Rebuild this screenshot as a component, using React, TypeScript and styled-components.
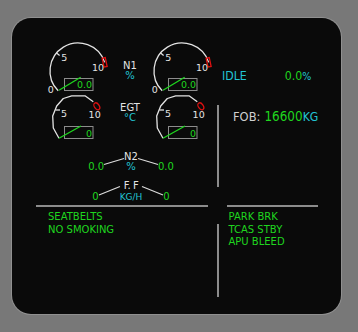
import React from "react";
import styled, { createGlobalStyle, css } from "styled-components";

const GREEN = "#1fd61f";
const CYAN = "#22c4d4";
const WHITE = "#e4e4e4";
const RULE = "#8c8c8c";
const RED = "#e01010";

const tall = (k: number) => css`
  display: inline-block;
  transform: scaleY(${k});
`;

const Global = createGlobalStyle`
  html, body { margin: 0; padding: 0; background: #787878; }
  body {
    width: 358px; height: 332px; overflow: hidden;
    font-family: "DejaVu Sans", "Noto Sans", sans-serif;
  }
`;

const Page = styled.div`
  width: 358px;
  height: 332px;
  box-sizing: border-box;
  padding: 18px 17px 18px 12px;
  background: #787878;
`;

const Screen = styled.div`
  width: 329px;
  height: 296px;
  box-sizing: border-box;
  background: #0a0a0a;
  border-radius: 19px;
  box-shadow: 0 0 0 1px #909090;
  padding: 20px 0 0 24px;
  display: flex;
  flex-direction: column;
`;

const Top = styled.div`
  display: flex;
  padding-left: 8px;
  height: 164px;
`;

const LeftCol = styled.div`
  width: 172px;
  display: flex;
  flex-direction: column;
`;

const GaugeGrid = styled.div`
  display: grid;
  grid-template-columns: 68px 36px 68px;
  grid-template-rows: 56px 50px;
`;

const LabelCell = styled.div<{ $pt: number }>`
  display: flex;
  flex-direction: column;
  align-items: center;
  padding-top: ${(p) => p.$pt}px;
`;

const Caption = styled.span<{ $size?: number; $spacing?: number }>`
  color: ${WHITE};
  font-size: ${(p) => p.$size ?? 10}px;
  letter-spacing: ${(p) => p.$spacing ?? 0}px;
  line-height: 10px;
  white-space: nowrap;
`;

const Unit = styled.span<{ $size?: number; $mt?: number }>`
  color: ${CYAN};
  font-size: ${(p) => p.$size ?? 10}px;
  line-height: 10px;
  margin-top: ${(p) => p.$mt ?? 0}px;
  white-space: nowrap;
`;

const Reading = styled.span<{ $mt: number }>`
  color: ${GREEN};
  font-size: 10px;
  line-height: 10px;
  margin-top: ${(p) => p.$mt}px;
  white-space: nowrap;
`;

const ParamRow = styled.div<{ $mt: number }>`
  display: grid;
  grid-template-columns: 1fr auto 1fr;
  padding-left: 2px;
  margin-top: ${(p) => p.$mt}px;
`;

const Side = styled.div<{ $end?: boolean }>`
  display: flex;
  align-items: flex-start;
  justify-content: ${(p) => (p.$end ? "flex-end" : "flex-start")};
`;

const Stack = styled.div`
  display: flex;
  flex-direction: column;
  align-items: center;
`;

const Connector = styled.svg<{ $mt: number }>`
  display: block;
  margin-top: ${(p) => p.$mt}px;
  overflow: visible;
`;

const RightCol = styled.div`
  flex: 1;
  display: flex;
  flex-direction: column;
`;

const ThrustRow = styled.div`
  display: flex;
  align-items: baseline;
  gap: 38px;
  margin-top: 32px;
  padding-left: 6px;
  line-height: 13px;
`;

const Mode = styled.span`
  color: ${CYAN};
  font-size: 11px;
  ${tall(1.1)}
`;

const Figure = styled.span`
  display: flex;
  align-items: baseline;
`;

const Value = styled.span<{ $size: number }>`
  color: ${GREEN};
  font-size: ${(p) => p.$size}px;
  ${tall(1.12)}
`;

const Suffix = styled.span<{ $size: number }>`
  color: ${CYAN};
  font-size: ${(p) => p.$size}px;
  ${tall(1.12)}
`;

const FobArea = styled.div`
  display: flex;
  margin-top: 22px;
`;

const VRule = styled.div<{ $h: number; $mt?: number }>`
  width: 1.5px;
  height: ${(p) => p.$h}px;
  margin-top: ${(p) => p.$mt ?? 0}px;
  margin-left: 1px;
  background: ${RULE};
  flex: none;
`;

const FobText = styled.div`
  display: flex;
  align-items: baseline;
  margin-left: 14.5px;
  margin-top: 4.6px;
  line-height: 14px;
  white-space: nowrap;
`;

const FobKey = styled.span`
  color: #d0d0d0;
  font-size: 11.5px;
  margin-right: 4px;
  ${tall(1.12)}
`;

const Dividers = styled.div`
  display: flex;
  gap: 19px;
  margin-top: 3px;
`;

const HRule = styled.div<{ $w: number }>`
  width: ${(p) => p.$w}px;
  height: 2px;
  background: ${RULE};
`;

const Bottom = styled.div`
  display: flex;
  margin-top: 4px;
`;

const Memo = styled.div<{ $w?: number; $pl: number }>`
  ${(p) => (p.$w ? `width: ${p.$w}px;` : "")}
  box-sizing: border-box;
  padding-left: ${(p) => p.$pl}px;
  display: flex;
  flex-direction: column;
  align-items: flex-start;
`;

const MemoLine = styled.span`
  color: ${GREEN};
  font-size: 10px;
  line-height: 12.5px;
  white-space: nowrap;
  ${tall(1.06)}
`;

const GaugeSvg = styled.svg`
  display: block;
  overflow: visible;
  font-family: "DejaVu Sans", "Noto Sans", sans-serif;
`;

const ScaleText = styled.text`
  fill: ${WHITE};
  font-size: 9.5px;
`;

const BoxText = styled.text`
  fill: ${GREEN};
  font-size: 9.5px;
`;

function N1Gauge({ value }: { value: string }) {
  const cx = 34;
  const cy = 33;
  const r = 28;
  const pt = (deg: number, rr = r) => [
    cx + rr * Math.cos((deg * Math.PI) / 180),
    cy - rr * Math.sin((deg * Math.PI) / 180),
  ];
  const [sx, sy] = pt(225);
  const [ex, ey] = pt(18);
  const [t1x, t1y] = pt(140);
  const [t2x, t2y] = pt(140, 24);
  return (
    <GaugeSvg width={68} height={56} viewBox="0 0 68 56">
      <path
        d={`M${sx} ${sy} A${r} ${r} 0 1 1 ${ex} ${ey}`}
        stroke={WHITE}
        strokeWidth={1.3}
        fill="none"
      />
      <line x1={t1x} y1={t1y} x2={t2x} y2={t2y} stroke={WHITE} strokeWidth={1.3} />
      <rect
        x={ex - 1.6}
        y={ey - 4.5}
        width={3.2}
        height={9}
        transform={`rotate(-12 ${ex} ${ey})`}
        stroke={RED}
        strokeWidth={1.3}
        fill="none"
      />
      <ScaleText x={17.2} y={22.7}>5</ScaleText>
      <ScaleText x={60} y={32.5} textAnchor="end">10</ScaleText>
      <ScaleText x={3.8} y={54.5}>0</ScaleText>
      <rect x={20.5} y={40.5} width={28.5} height={12} stroke={RULE} strokeWidth={1} fill="none" />
      <line x1={15} y1={52.3} x2={36.7} y2={39.3} stroke={GREEN} strokeWidth={1.3} />
      <BoxText x={48} y={50.3} textAnchor="end">{value}</BoxText>
    </GaugeSvg>
  );
}

function EgtGauge({ value }: { value: string }) {
  const pts = "15,44.3 9.3,34 8.7,22 12.7,12 19.3,4.5 27.7,1.8 41,1.8 49.3,7.7";
  return (
    <GaugeSvg width={68} height={50} viewBox="0 0 68 50">
      <polyline points={pts} stroke={WHITE} strokeWidth={1.3} fill="none" strokeLinejoin="round" />
      <line x1={11.5} y1={16} x2={16} y2={16} stroke={WHITE} strokeWidth={1.3} />
      <ellipse
        cx={52.8}
        cy={12.3}
        rx={2.4}
        ry={3.8}
        transform="rotate(-35 52.8 12.3)"
        stroke={RED}
        strokeWidth={1.3}
        fill="none"
      />
      <ScaleText x={17} y={22.7}>5</ScaleText>
      <ScaleText x={56.7} y={24.3} textAnchor="end">10</ScaleText>
      <rect x={20.5} y={32.5} width={28.5} height={12} stroke={RULE} strokeWidth={1} fill="none" />
      <line x1={15} y1={44.3} x2={37} y2={32} stroke={GREEN} strokeWidth={1.3} />
      <BoxText x={48} y={42.7} textAnchor="end">{value}</BoxText>
    </GaugeSvg>
  );
}

function Line({ rising, w, h, mt }: { rising: boolean; w: number; h: number; mt: number }) {
  return (
    <Connector width={w} height={h} viewBox={`0 0 ${w} ${h}`} $mt={mt}>
      <line
        x1={0}
        y1={rising ? h - 0.5 : 0.5}
        x2={w}
        y2={rising ? 0.5 : h - 0.5}
        stroke="#dcdcdc"
        strokeWidth={1.2}
      />
    </Connector>
  );
}

export default function App() {
  return (
    <>
      <Global />
      <Page>
        <Screen>
          <Top>
            <LeftCol>
              <GaugeGrid>
                <N1Gauge value="0.0" />
                <LabelCell $pt={23}>
                  <Caption>N1</Caption>
                  <Unit>%</Unit>
                </LabelCell>
                <N1Gauge value="0.0" />
                <EgtGauge value="0" />
                <LabelCell $pt={9}>
                  <Caption>EGT</Caption>
                  <Unit>°C</Unit>
                </LabelCell>
                <EgtGauge value="0" />
              </GaugeGrid>

              <ParamRow $mt={7.5}>
                <Side $end>
                  <Reading $mt={10}>0.0</Reading>
                  <Line rising w={20} h={7} mt={6} />
                </Side>
                <Stack>
                  <Caption>N2</Caption>
                  <Unit>%</Unit>
                </Stack>
                <Side>
                  <Line rising={false} w={20} h={7} mt={6} />
                  <Reading $mt={10}>0.0</Reading>
                </Side>
              </ParamRow>

              <ParamRow $mt={9}>
                <Side $end>
                  <Reading $mt={11.6}>0</Reading>
                  <Line rising w={21} h={9.5} mt={5.5} />
                </Side>
                <Stack>
                  <Caption $spacing={-0.4}>F. F</Caption>
                  <Unit $size={9} $mt={1.3}>KG/H</Unit>
                </Stack>
                <Side>
                  <Line rising={false} w={21} h={9.5} mt={5.5} />
                  <Reading $mt={11.6}>0</Reading>
                </Side>
              </ParamRow>
            </LeftCol>

            <RightCol>
              <ThrustRow>
                <Mode>IDLE</Mode>
                <Figure>
                  <Value $size={11}>0.0</Value>
                  <Suffix $size={9.5}>%</Suffix>
                </Figure>
              </ThrustRow>
              <FobArea>
                <VRule $h={82} />
                <FobText>
                  <FobKey>FOB:</FobKey>
                  <Value $size={12}>16600</Value>
                  <Suffix $size={11}>KG</Suffix>
                </FobText>
              </FobArea>
            </RightCol>
          </Top>

          <Dividers>
            <HRule $w={172} />
            <HRule $w={91} />
          </Dividers>

          <Bottom>
            <Memo $w={180} $pl={12}>
              <MemoLine>SEATBELTS</MemoLine>
              <MemoLine>NO SMOKING</MemoLine>
            </Memo>
            <VRule $h={73} $mt={13} />
            <Memo $pl={10}>
              <MemoLine>PARK BRK</MemoLine>
              <MemoLine>TCAS STBY</MemoLine>
              <MemoLine>APU BLEED</MemoLine>
            </Memo>
          </Bottom>
        </Screen>
      </Page>
    </>
  );
}
